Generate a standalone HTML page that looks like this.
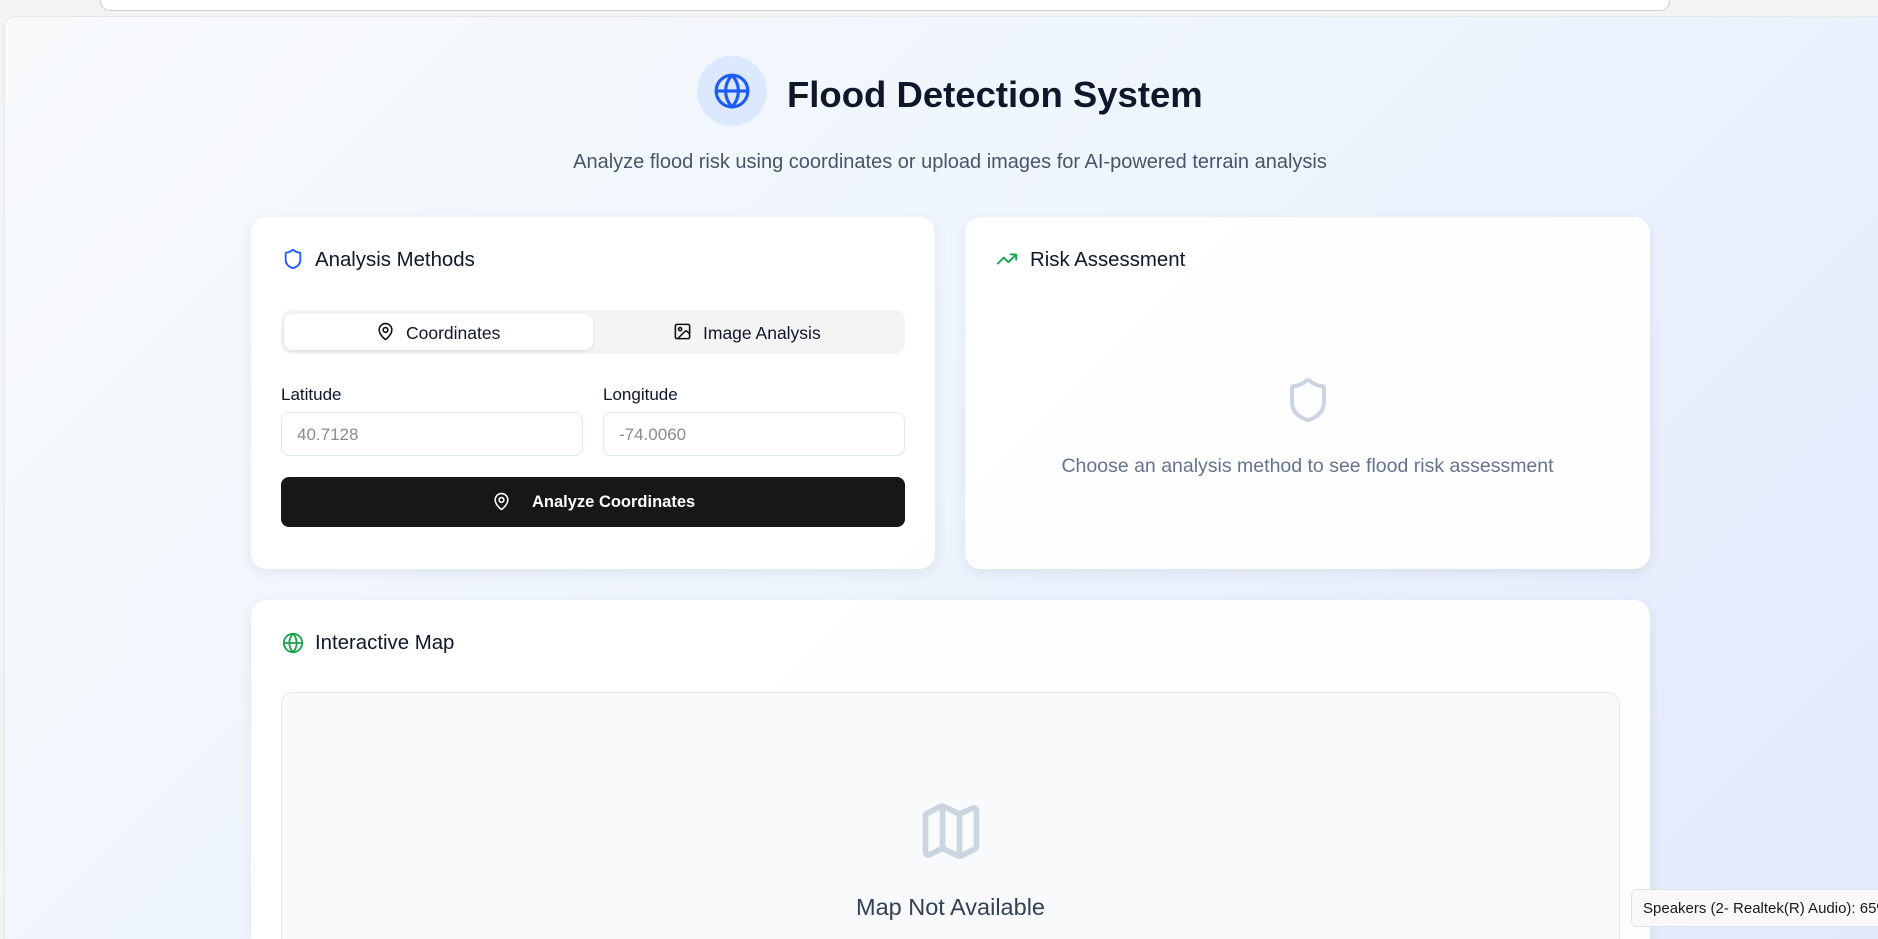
<!DOCTYPE html>
<html><head><meta charset="utf-8"><style>
*{box-sizing:border-box;margin:0;padding:0}
html,body{width:1878px;height:939px;overflow:hidden}
body{background:#f3f3f3;font-family:"Liberation Sans",sans-serif;position:relative}
.bar{position:absolute;left:100px;top:-10px;width:1570px;height:21px;background:#fff;border:1px solid #d0d0d0;border-radius:10px}
.page{position:absolute;left:4px;top:16px;width:1874px;height:923px;border-radius:10px 0 0 0;background:linear-gradient(135deg,#f8fafc 0%,#eff5fd 45%,#e3e9fc 100%);border-left:1px solid #e6e6e6;border-top:1px solid #e6e6e6}
.abs{position:absolute}
.card{position:absolute;background:rgba(255,255,255,.92);border-radius:16px;box-shadow:0 4px 14px rgba(30,41,59,.08)}
.h{position:absolute;font-size:20.4px;color:#0f172a}
.lbl{position:absolute;font-size:17px;color:#0f172a}
.inp{position:absolute;height:44px;border:1px solid #e2e8f0;border-radius:8px;background:#fff;font-size:17px;color:#8b8b8b;padding:12px 15px}
</style></head><body>
<div class="bar"></div>
<div class="page"></div>
<div class="abs" style="left:697px;top:56px;width:70px;height:70px;border-radius:50%;background:#dbe8fe"></div>
<svg class="abs" style="left:713px;top:72px" width="38" height="38" viewBox="0 0 24 24" fill="none" stroke="#1d5cf5" stroke-width="2" stroke-linecap="round"><circle cx="12" cy="12" r="10"/><path d="M12 2a14.5 14.5 0 0 0 0 20 14.5 14.5 0 0 0 0-20M2 12h20"/></svg>
<div class="abs" style="left:787px;top:74px;font-size:36.5px;font-weight:bold;color:#0f172a">Flood Detection System</div>
<div class="abs" style="left:0;width:1900px;text-align:center;top:151px;font-size:20px;color:#475569">Analyze flood risk using coordinates or upload images for AI-powered terrain analysis</div>

<div class="card" style="left:251px;top:217px;width:684px;height:352px"></div>
<svg class="abs" style="left:282px;top:248px" width="22" height="22" viewBox="0 0 24 24" fill="none" stroke="#1d5cf5" stroke-width="2" stroke-linejoin="round"><path d="M20 13c0 5-3.5 7.5-7.7 9a1 1 0 0 1-.7 0C7.5 20.5 4 18 4 13V6a1 1 0 0 1 1-1c2 0 4.5-1.2 6.2-2.7a1.2 1.2 0 0 1 1.5 0C14.5 3.8 17 5 19 5a1 1 0 0 1 1 1z"/></svg>
<div class="h" style="left:315px;top:249px">Analysis Methods</div>
<div class="abs" style="left:281px;top:310px;width:624px;height:44px;background:#f4f4f5;border-radius:10px"></div>
<div class="abs" style="left:284px;top:314px;width:309px;height:36px;background:#fff;border-radius:8px;box-shadow:0 1px 3px rgba(0,0,0,.12)"></div>
<svg class="abs" style="left:376px;top:322px" width="19" height="19" viewBox="0 0 24 24" fill="none" stroke="#111" stroke-width="2"><path d="M20 10c0 5-5.5 10.2-7.4 11.8a1 1 0 0 1-1.2 0C9.5 20.2 4 15 4 10a8 8 0 0 1 16 0"/><circle cx="12" cy="10" r="3"/></svg>
<div class="abs" style="left:406px;top:323px;font-size:17.5px;color:#0f172a">Coordinates</div>
<svg class="abs" style="left:673px;top:322px" width="19" height="19" viewBox="0 0 24 24" fill="none" stroke="#111" stroke-width="2"><rect x="3" y="3" width="18" height="18" rx="2"/><circle cx="9" cy="9" r="2"/><path d="m21 15-3-3a2 2 0 0 0-3 0L6 21"/></svg>
<div class="abs" style="left:703px;top:323px;font-size:17.5px;color:#0f172a">Image Analysis</div>
<div class="lbl" style="left:281px;top:385px">Latitude</div>
<div class="lbl" style="left:603px;top:385px">Longitude</div>
<div class="inp" style="left:281px;top:412px;width:302px">40.7128</div>
<div class="inp" style="left:603px;top:412px;width:302px">-74.0060</div>
<div class="abs" style="left:281px;top:477px;width:624px;height:50px;background:#171717;border-radius:8px"></div>
<svg class="abs" style="left:492px;top:492px" width="19" height="19" viewBox="0 0 24 24" fill="none" stroke="#fff" stroke-width="2"><path d="M20 10c0 5-5.5 10.2-7.4 11.8a1 1 0 0 1-1.2 0C9.5 20.2 4 15 4 10a8 8 0 0 1 16 0"/><circle cx="12" cy="10" r="3"/></svg>
<div class="abs" style="left:532px;top:493px;font-size:16.5px;color:#fff;font-weight:bold">Analyze Coordinates</div>

<div class="card" style="left:965px;top:217px;width:685px;height:352px"></div>
<svg class="abs" style="left:995px;top:248px" width="24" height="22" viewBox="0 0 24 24" fill="none" stroke="#16a34a" stroke-width="2" stroke-linecap="round" stroke-linejoin="round"><path d="M22 7 13.5 15.5 8.5 10.5 2 17M16 7h6v6"/></svg>
<div class="h" style="left:1030px;top:249px">Risk Assessment</div>
<svg class="abs" style="left:1284px;top:376px" width="48" height="48" viewBox="0 0 24 24" fill="none" stroke="#cbd5e1" stroke-width="2" stroke-linejoin="round"><path d="M20 13c0 5-3.5 7.5-7.7 9a1 1 0 0 1-.7 0C7.5 20.5 4 18 4 13V6a1 1 0 0 1 1-1c2 0 4.5-1.2 6.2-2.7a1.2 1.2 0 0 1 1.5 0C14.5 3.8 17 5 19 5a1 1 0 0 1 1 1z"/></svg>
<div class="abs" style="left:965px;width:685px;text-align:center;top:455px;font-size:19.5px;color:#64748b">Choose an analysis method to see flood risk assessment</div>

<div class="card" style="left:251px;top:600px;width:1399px;height:339px;border-radius:16px 16px 0 0"></div>
<svg class="abs" style="left:282px;top:632px" width="22" height="22" viewBox="0 0 24 24" fill="none" stroke="#16a34a" stroke-width="2" stroke-linecap="round"><circle cx="12" cy="12" r="10"/><path d="M12 2a14.5 14.5 0 0 0 0 20 14.5 14.5 0 0 0 0-20M2 12h20"/></svg>
<div class="h" style="left:315px;top:632px">Interactive Map</div>
<div class="abs" style="left:281px;top:692px;width:1339px;height:247px;background:#f9fafb;border:1px solid #e5e7eb;border-bottom:none;border-radius:12px 12px 0 0"></div>
<svg class="abs" style="left:917px;top:796px" width="68" height="68" viewBox="0 0 24 24" fill="none" stroke="#cbd5e1" stroke-width="2" stroke-linejoin="round"><path d="M14.1 6 9.9 3.9a2 2 0 0 0-1.8 0L3.6 6.1A1 1 0 0 0 3 7v12.8a1 1 0 0 0 1.4.9l3.7-1.8a2 2 0 0 1 1.8 0l4.2 2.1a2 2 0 0 0 1.8 0l4.5-2.3a1 1 0 0 0 .6-.9V5.2a1 1 0 0 0-1.4-.9L15.9 6a2 2 0 0 1-1.8 0zM15 5.8v15M9 3.2v15"/></svg>
<div class="abs" style="left:251px;width:1399px;text-align:center;top:894px;font-size:23.5px;color:#334155">Map Not Available</div>

<div class="abs" style="left:1631px;top:889px;width:247px;height:38px;background:#f9f9f9;border:1px solid #e0e0e0;border-right:none;border-radius:6px 0 0 6px;font-size:15px;color:#1a1a1a;padding:10px 11px;white-space:nowrap;overflow:hidden">Speakers (2- Realtek(R) Audio): 65%</div>
</body></html>
